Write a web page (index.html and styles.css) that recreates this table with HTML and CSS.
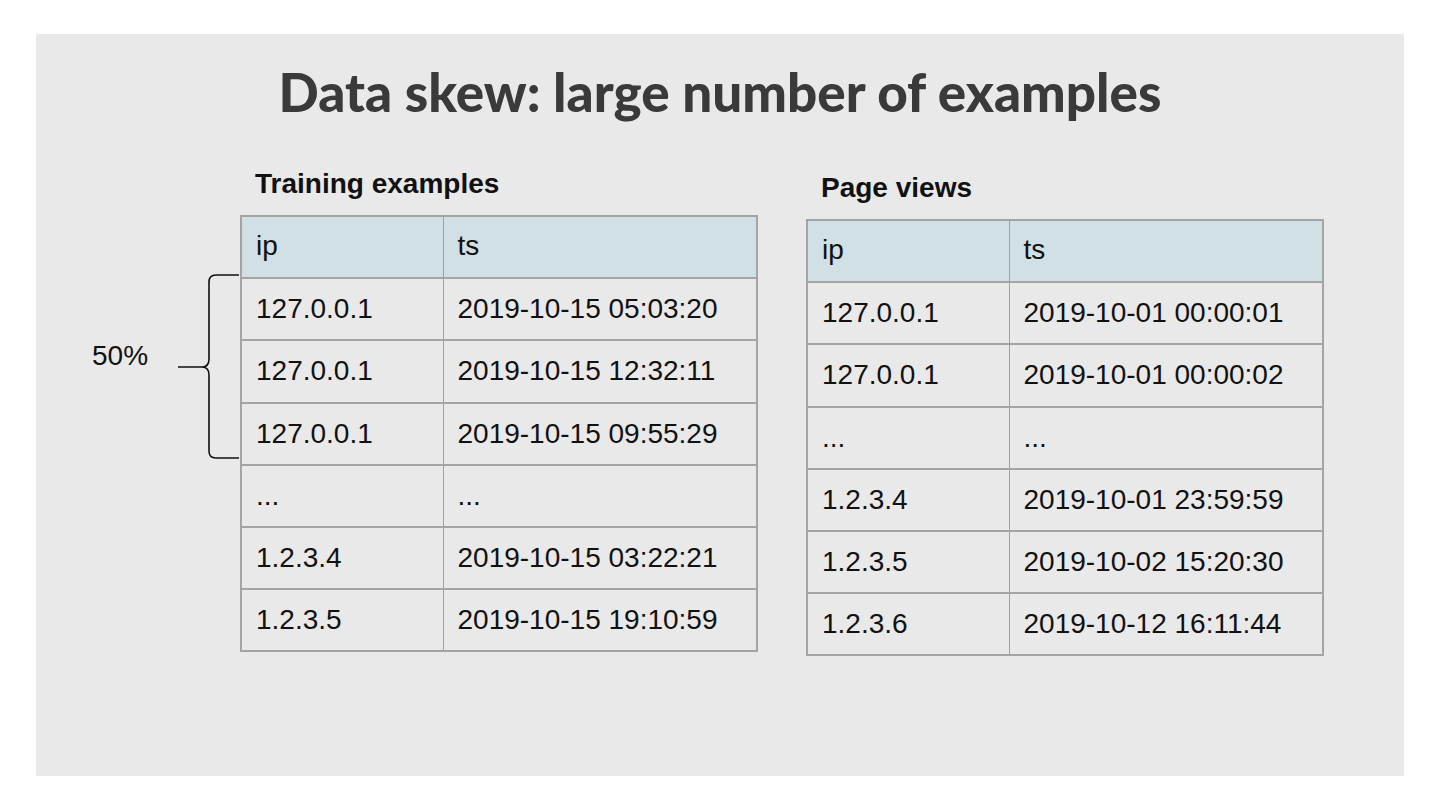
FILE: index.html
```html
<!DOCTYPE html>
<html>
<head>
<meta charset="utf-8">
<link rel="stylesheet" href="styles.css">
</head>
<body>
<div class="slide">
  <h1 class="title">Data skew: large number of examples</h1>
  <div class="content">
    <div class="note">
      <span class="pct">50%</span>
      <svg class="brace" width="62" height="186" viewBox="0 0 62 186">
        <path d="M61 1 H38 Q31 1 31 8 V85 Q31 93 24 93 H0 M24 93 Q31 93 31 101 V177 Q31 184 38 184 H61" fill="none" stroke="#111" stroke-width="1.6"/>
      </svg>
    </div>
    <div class="block">
      <h2 class="caption">Training examples</h2>
      <table class="grid">
        <tr class="head"><td class="c1">ip</td><td class="c2">ts</td></tr>
        <tr><td>127.0.0.1</td><td>2019-10-15 05:03:20</td></tr>
        <tr><td>127.0.0.1</td><td>2019-10-15 12:32:11</td></tr>
        <tr><td>127.0.0.1</td><td>2019-10-15 09:55:29</td></tr>
        <tr><td>...</td><td>...</td></tr>
        <tr><td>1.2.3.4</td><td>2019-10-15 03:22:21</td></tr>
        <tr><td>1.2.3.5</td><td>2019-10-15 19:10:59</td></tr>
      </table>
    </div>
    <div class="block second">
      <h2 class="caption">Page views</h2>
      <table class="grid">
        <tr class="head"><td class="c1">ip</td><td class="c2">ts</td></tr>
        <tr><td>127.0.0.1</td><td>2019-10-01 00:00:01</td></tr>
        <tr><td>127.0.0.1</td><td>2019-10-01 00:00:02</td></tr>
        <tr><td>...</td><td>...</td></tr>
        <tr><td>1.2.3.4</td><td>2019-10-01 23:59:59</td></tr>
        <tr><td>1.2.3.5</td><td>2019-10-02 15:20:30</td></tr>
        <tr><td>1.2.3.6</td><td>2019-10-12 16:11:44</td></tr>
      </table>
    </div>
  </div>
</div>
</body>
</html>
```

FILE: styles.css
```css
html, body {
  margin: 0;
  padding: 0;
  background: #ffffff;
}
body {
  width: 1440px;
  height: 810px;
  overflow: hidden;
}
.slide {
  margin: 34px 0 0 36px;
  width: 1368px;
  height: 742px;
  background: #e9e9e9;
  box-sizing: border-box;
  padding-top: 28px;
}
.title {
  margin: 0;
  text-align: center;
  font-family: "Lato", "Open Sans", sans-serif;
  font-weight: 900;
  font-size: 53px;
  line-height: 60px;
  color: #3a3a3a;
}
.content {
  display: flex;
  align-items: flex-start;
  margin-top: 46px;
  padding-left: 56px;
}
.note {
  display: flex;
  align-items: center;
  width: 148px;
  margin-top: 106px;
}
.pct {
  font-family: "Liberation Sans", Arial, sans-serif;
  font-size: 28px;
  color: #111;
  width: 86px;
  margin-top: -22px;
}
.brace {
  display: block;
}
.block {
  display: flex;
  flex-direction: column;
}
.block.second {
  margin-left: 48px;
  margin-top: 4px;
}
.caption {
  margin: 0 0 15px 15px;
  font-family: "Liberation Sans", Arial, sans-serif;
  font-weight: 700;
  font-size: 28px;
  line-height: 32px;
  color: #111;
}
.grid {
  border-collapse: collapse;
  font-family: "Liberation Sans", Arial, sans-serif;
  font-size: 28px;
  color: #111;
  border: 2px solid #a4a4a4;
}
.grid td {
  height: 62.2px;
  padding: 0 0 0 14px;
  box-sizing: border-box;
  border-top: 2px solid #a4a4a4;
  border-bottom: 2px solid #a4a4a4;
  border-left: 1px solid #a0a0a0;
  vertical-align: middle;
  white-space: nowrap;
}
.grid .c1 { width: 202px; }
.grid .c2 { width: 314px; }
.grid .head td {
  background: #d1e0e4;
  padding-bottom: 2px;
}
```
